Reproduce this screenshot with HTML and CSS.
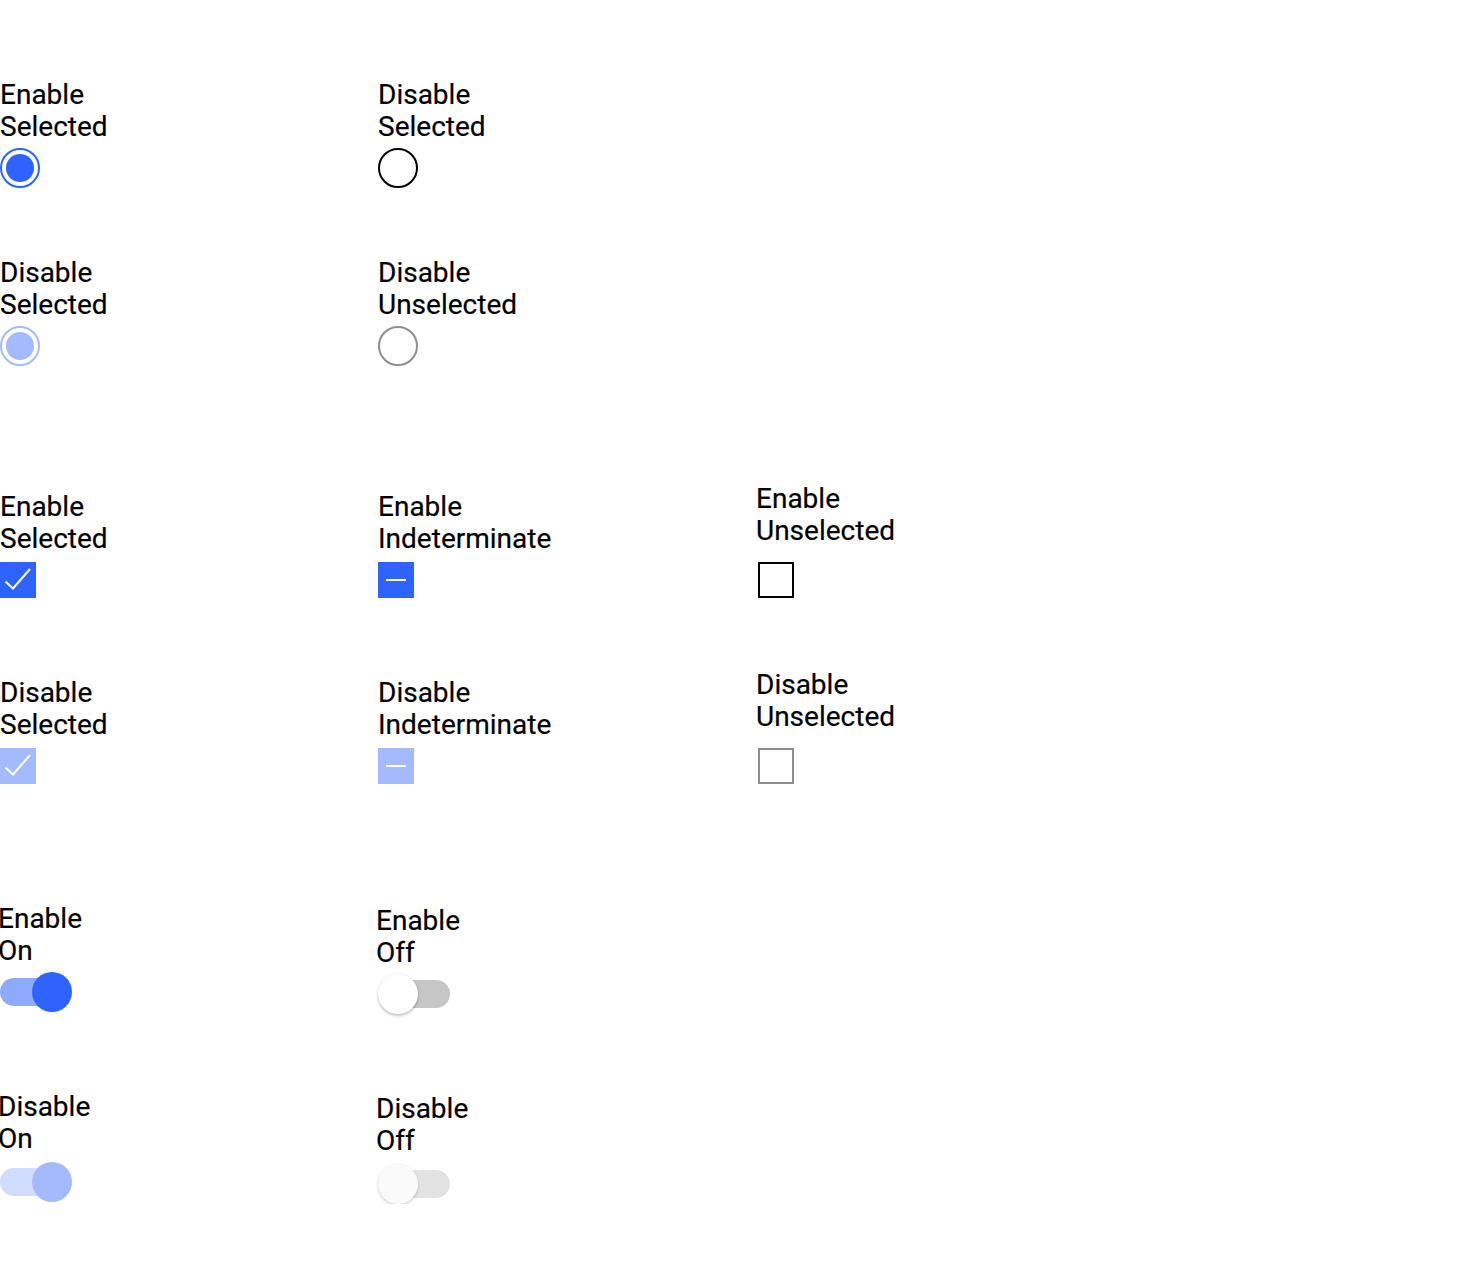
FILE: index.html
```html
<!DOCTYPE html>
<html>
<head>
<meta charset="utf-8">
<link rel="stylesheet" href="styles.css">
</head>
<body>
<div class="page">
  <section class="radios">
    <div class="row">
      <div class="item">
        <div class="label">Enable<br>Selected</div>
        <span class="radio on"><span class="dot"></span></span>
      </div>
      <div class="item">
        <div class="label">Disable<br>Selected</div>
        <span class="radio"></span>
      </div>
    </div>
    <div class="row row2">
      <div class="item">
        <div class="label">Disable<br>Selected</div>
        <span class="radio on disabled"><span class="dot"></span></span>
      </div>
      <div class="item">
        <div class="label">Disable<br>Unselected</div>
        <span class="radio disabled"></span>
      </div>
    </div>
  </section>

  <section class="checks">
    <div class="row">
      <div class="item">
        <div class="label">Enable<br>Selected</div>
        <span class="box filled"><svg viewBox="0 0 36 36" width="36" height="36"><path d="M5.5 19.5 L13 26.5 L30 7" fill="none" stroke="#fff" stroke-width="2"/></svg></span>
      </div>
      <div class="item">
        <div class="label">Enable<br>Indeterminate</div>
        <span class="box filled"><svg viewBox="0 0 36 36" width="36" height="36"><path d="M8 18 H28" fill="none" stroke="#fff" stroke-width="2"/></svg></span>
      </div>
      <div class="item wide">
        <div class="label">Enable<br>Unselected</div>
        <span class="box empty"></span>
      </div>
    </div>
    <div class="row row2">
      <div class="item">
        <div class="label">Disable<br>Selected</div>
        <span class="box filled disabled"><svg viewBox="0 0 36 36" width="36" height="36"><path d="M5.5 19.5 L13 26.5 L30 7" fill="none" stroke="#fff" stroke-width="2"/></svg></span>
      </div>
      <div class="item">
        <div class="label">Disable<br>Indeterminate</div>
        <span class="box filled disabled"><svg viewBox="0 0 36 36" width="36" height="36"><path d="M8 18 H28" fill="none" stroke="#fff" stroke-width="2"/></svg></span>
      </div>
      <div class="item wide">
        <div class="label">Disable<br>Unselected</div>
        <span class="box empty disabled"></span>
      </div>
    </div>
  </section>

  <section class="switches">
    <div class="row">
      <div class="item">
        <div class="label">Enable<br>On</div>
        <span class="switch on"><span class="track"></span><span class="thumb"></span></span>
      </div>
      <div class="item low">
        <div class="label">Enable<br>Off</div>
        <span class="switch off"><span class="track"></span><span class="thumb"></span></span>
      </div>
    </div>
    <div class="row row2">
      <div class="item">
        <div class="label">Disable<br>On</div>
        <span class="switch on disabled"><span class="track"></span><span class="thumb"></span></span>
      </div>
      <div class="item low">
        <div class="label">Disable<br>Off</div>
        <span class="switch off disabled"><span class="track"></span><span class="thumb"></span></span>
      </div>
    </div>
  </section>
</div>
</body>
</html>
```

FILE: styles.css
```css
html, body {
  margin: 0;
  padding: 0;
  background: #fff;
}
body {
  font-family: Roboto, "Noto Sans", sans-serif;
  font-size: 28px;
  font-weight: 400;
  line-height: 32px;
  color: #000;
}
.page {
  padding-top: 78px;
}
.row {
  display: grid;
  grid-template-columns: 378px 378px 378px;
  align-items: start;
}
.item {
  display: flex;
  flex-direction: column;
  align-items: flex-start;
}
.label {
  padding-top: 1px;
  white-space: nowrap;
  -webkit-text-stroke: 0.2px #000;
}

/* radios */
.radios .row2 { margin-top: 68px; }
.radio {
  margin-top: 5px;
  box-sizing: border-box;
  width: 40px;
  height: 40px;
  border-radius: 50%;
  border: 2px solid #000;
  display: flex;
  align-items: center;
  justify-content: center;
}
.radio.on { border-color: #2e63ff; }
.radio .dot {
  width: 28px;
  height: 28px;
  border-radius: 50%;
  background: #2e63ff;
}
.radio.disabled { border-color: #8e8e8e; }
.radio.on.disabled { border-color: #a3baff; }
.radio.on.disabled .dot { background: #a3baff; }

/* checkboxes */
.checks { margin-top: 116px; }
.checks .row { align-items: end; }
.checks .row2 { margin-top: 70px; }
.box {
  margin-top: 7px;
  box-sizing: border-box;
  width: 36px;
  height: 36px;
  display: block;
}
.box svg { display: block; }
.item.wide .box { margin-top: 15px; margin-left: 2px; }
.box.filled { background: #2e63ff; }
.box.filled.disabled { background: #a3baff; }
.box.empty { border: 2px solid #000; }
.box.empty.disabled { border-color: #8e8e8e; }

/* switches */
.switches {
  margin-top: 118px;
  margin-left: -2px;
}
.switches .row2 { margin-top: 76px; }
.switches .row2 .switch { margin-top: 7px; }
.item.low { margin-top: 2px; }
.switch {
  margin-top: 5px;
  position: relative;
  width: 76px;
  height: 40px;
  display: block;
}
.switch .track {
  position: absolute;
  left: 4px;
  top: 6px;
  width: 68px;
  height: 28px;
  border-radius: 14px;
  background: #c6c6c6;
}
.switch .thumb {
  position: absolute;
  top: 0;
  left: 0;
  width: 40px;
  height: 40px;
  border-radius: 50%;
  background: #fff;
  box-shadow: 0 2px 3px rgba(0,0,0,0.22), 0 0 2px rgba(0,0,0,0.12);
}
.switch.on .track { left: 2px; background: #8eaaff; }
.switch.on .thumb { left: 34px; background: #2e63ff; box-shadow: none; }
.switch.on.disabled .track { background: #d1ddff; }
.switch.on.disabled .thumb { background: #a3baff; }
.switch.off .track { left: 6px; }
.switch.off .thumb { left: 2px; }
.switch.off.disabled .track { background: #e3e3e3; }
.switch.off.disabled .thumb { background: #fafafa; box-shadow: 0 2px 3px rgba(0,0,0,0.14), 0 0 2px rgba(0,0,0,0.08); }
```
